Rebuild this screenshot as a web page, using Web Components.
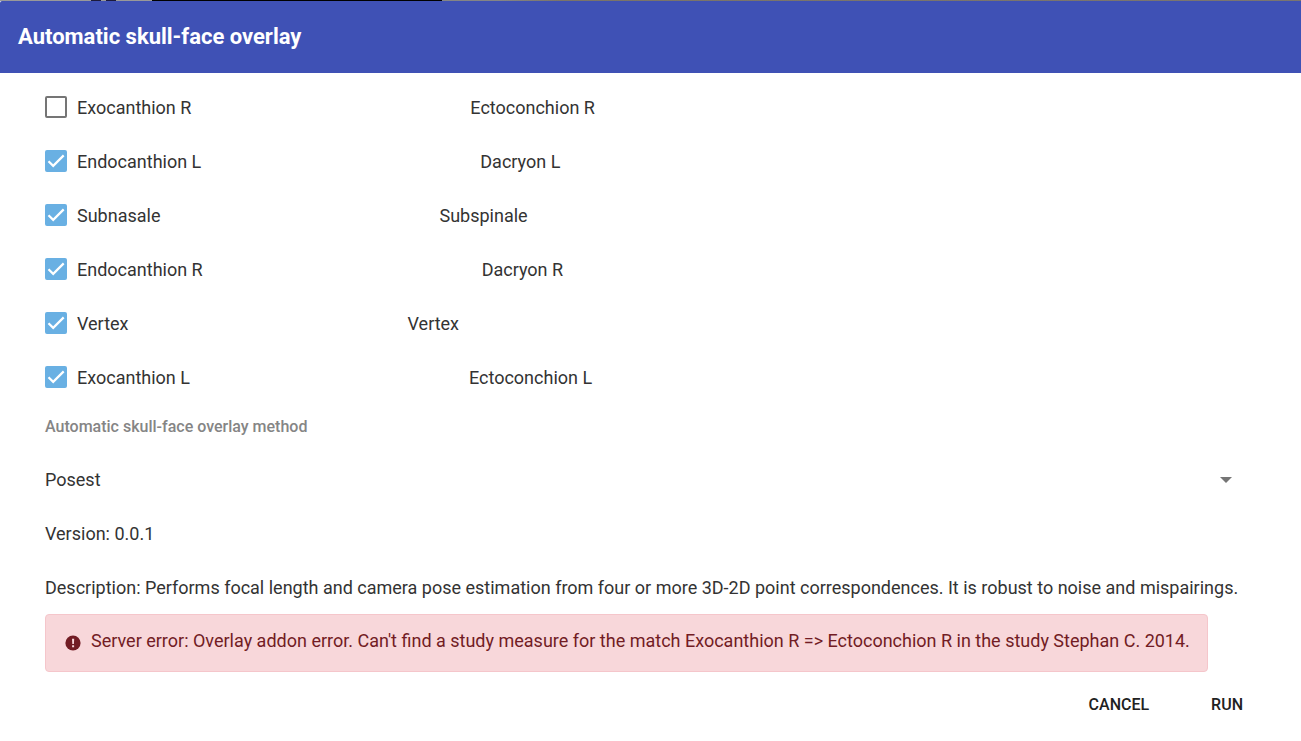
<!DOCTYPE html>
<html lang="en">
<head>
<meta charset="utf-8">
<title>Automatic skull-face overlay</title>
<style>
body{margin:0;background:#fff;color:#333;font:18px/22px Roboto,sans-serif}
</style>
</head>
<body>
<overlay-dialog heading="Automatic skull-face overlay">
  <match-row target="Ectoconchion R">Exocanthion R</match-row>
  <match-row target="Dacryon L" checked>Endocanthion L</match-row>
  <match-row target="Subspinale" checked>Subnasale</match-row>
  <match-row target="Dacryon R" checked>Endocanthion R</match-row>
  <match-row target="Vertex" checked>Vertex</match-row>
  <match-row target="Ectoconchion L" checked>Exocanthion L</match-row>
  <method-select label="Automatic skull-face overlay method" options="Posest"></method-select>
  <info-line>Version: 0.0.1</info-line>
  <info-line>Description: Performs focal length and camera pose estimation from four or more 3D-2D point correspondences. It is robust to noise and mispairings.</info-line>
  <error-alert>Server error: Overlay addon error. Can't find a study measure for the match Exocanthion R =&gt; Ectoconchion R in the study Stephan C. 2014.</error-alert>
  <text-button slot="actions">CANCEL</text-button>
  <text-button slot="actions">RUN</text-button>
</overlay-dialog>
<script>
function define(name, markup, setup) {
  const template = document.createElement('template');
  template.innerHTML = markup;
  customElements.define(name, class extends HTMLElement {
    constructor() {
      super();
      this.attachShadow({mode: 'open'}).append(template.content.cloneNode(true));
    }
    connectedCallback() { if (setup) setup(this, this.shadowRoot); }
  });
}

define('overlay-dialog', `
<style>
:host{display:block}
.backdrop{height:1px;background:linear-gradient(90deg,#999 91px,#1c1a3c 91px 101px,#999 101px 106px,#1c1a3c 106px 116px,#999 116px 152px,#000 152px 442px,#858585 442px 500px,#7b7468 560px,#7a7570)}
header{background:#3f51b5;color:#fff;height:72px;padding:0 18px;border-radius:2px 0 0 0}
h1{margin:0;padding-top:22px;font-size:22px;line-height:28px;font-weight:700}
main{padding:7px 45px 0}
footer{display:flex;justify-content:flex-end;gap:26px;padding:13px 40px 0}
</style>
<div class="backdrop"></div>
<header><h1></h1></header>
<main><slot></slot></main>
<footer><slot name="actions"></slot></footer>`,
(el, root) => { root.querySelector('h1').textContent = el.getAttribute('heading'); });

define('match-row', `
<style>
:host{display:flex;align-items:center;height:54px;gap:279px}
label{display:flex;align-items:center;gap:10px}
.text{padding-top:2px}
.box{display:grid;width:22px;height:22px}
.box>*{grid-area:1/1}
input{appearance:none;width:22px;height:22px;margin:0;border:2px solid #757575;border-radius:2px;box-sizing:border-box}
input:checked{background:#69b0e3;border-color:#69b0e3}
svg{width:22px;height:22px;pointer-events:none;visibility:hidden}
input:checked+svg{visibility:visible}
</style>
<label><span class="box"><input type="checkbox"><svg viewBox="0 0 22 22"><path d="M3.5 11.2 8.2 15.9 18.7 5.4" fill="none" stroke="#fff" stroke-width="2.2"/></svg></span><span class="text"><slot></slot></span></label>
<span class="target text"></span>`,
(el, root) => {
  root.querySelector('input').checked = el.hasAttribute('checked');
  root.querySelector('.target').textContent = el.getAttribute('target');
});

define('method-select', `
<style>
:host{display:block}
label{display:block;padding:12px 0 15px;font-size:16px;line-height:22px;font-weight:500;color:#858585}
.field{display:grid;align-items:center;height:54px}
.field>*{grid-area:1/1}
select{appearance:none;width:100%;height:54px;margin:0;padding:0;border:0;background:none;color:inherit;font:inherit}
svg{justify-self:end;width:12px;height:6px;margin-right:24px;pointer-events:none}
</style>
<label for="method"></label>
<div class="field"><select id="method"></select><svg viewBox="0 0 12 6"><path d="M0 0h12L6 6z" fill="#757575"/></svg></div>`,
(el, root) => {
  root.querySelector('label').textContent = el.getAttribute('label');
  root.querySelector('select').replaceChildren(...el.getAttribute('options').split(',').map(name => new Option(name)));
});

define('info-line', `
<style>:host{display:block;padding:16px 0;margin-right:-12px}</style>
<slot></slot>`);

define('error-alert', `
<style>
:host{display:flex;align-items:center;gap:10px;box-sizing:border-box;width:fit-content;margin-top:-1px;min-height:58px;padding:0 17px 4px 19px;background:#f8d7da;border:1px solid #f5c6cb;border-radius:4px;color:#721c24}
svg{flex:none;width:16px;height:16px;margin-top:4px}
</style>
<svg viewBox="0 0 16 16"><circle cx="8" cy="8" r="7.6" fill="#721c24"/><path d="M7 3.8h2.2L8.9 9H7.3zM7.1 10.2h2v2h-2z" fill="#f8d7da"/></svg>
<div role="alert"><slot></slot></div>`);

define('text-button', `
<style>
:host{display:block}
button{height:40px;padding:0 18px;border:0;border-radius:4px;background:none;color:#212121;font:500 16px/40px Roboto,sans-serif}
</style>
<button type="button"><slot></slot></button>`);
</script>
</body>
</html>
